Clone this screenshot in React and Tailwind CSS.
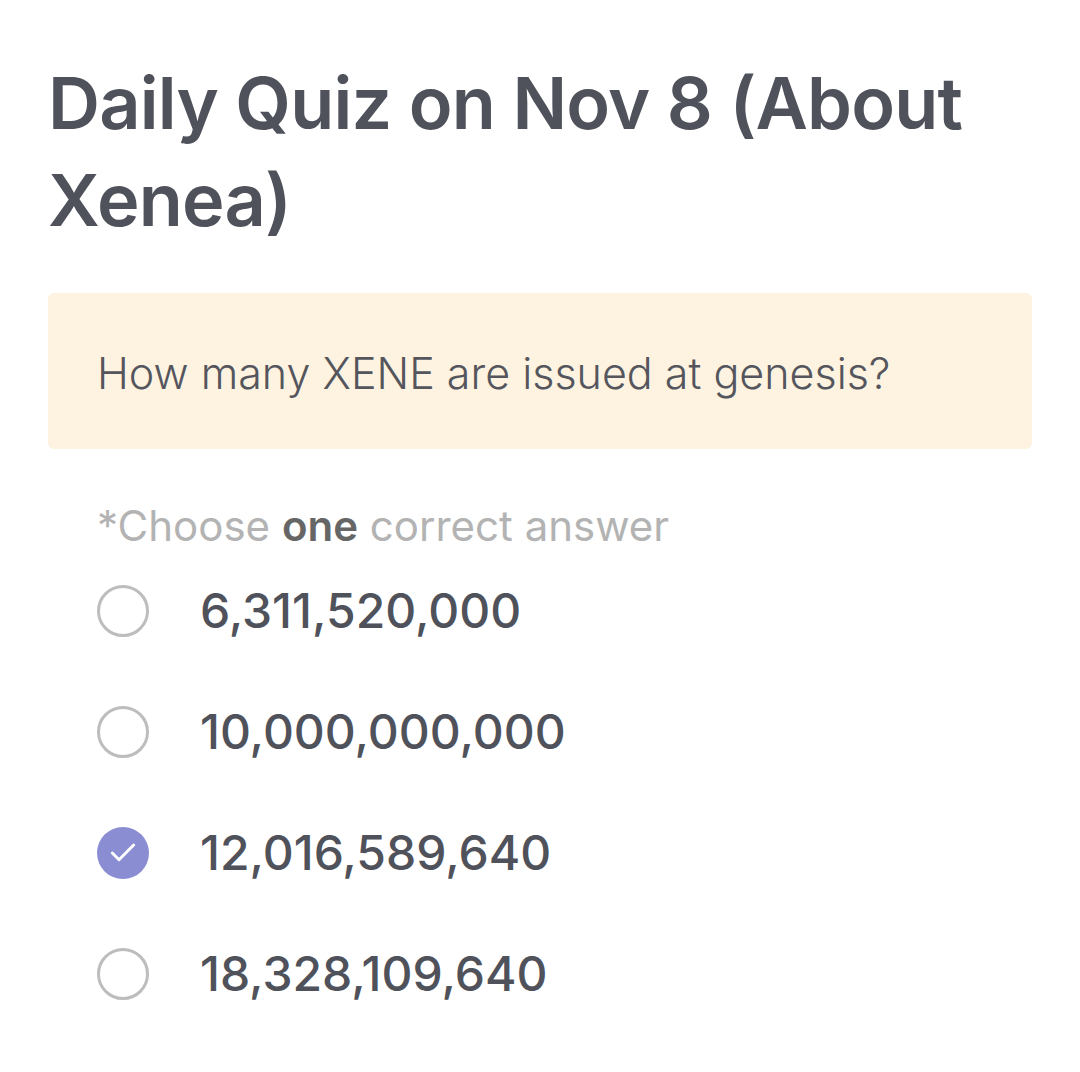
import { Check } from "lucide-react";

const options = [
  { label: "6,311,520,000", checked: false },
  { label: "10,000,000,000", checked: false },
  { label: "12,016,589,640", checked: true },
  { label: "18,328,109,640", checked: false },
];

function Radio({ checked }) {
  if (checked)
    return (
      <div className="w-[52px] h-[52px] rounded-full bg-[#8b8dd3] flex items-center justify-center shrink-0">
        <Check className="w-[32px] h-[32px] text-white" strokeWidth={2.2} />
      </div>
    );
  return <div className="w-[52px] h-[52px] rounded-full border-[3px] border-[#bdbdbd] shrink-0" />;
}

export default function App() {
  return (
    <div className="bg-white min-h-[1072px] px-[48px] pt-[54px] font-['Inter',sans-serif]">
      <h1 className="text-[72px] leading-[97px] font-semibold text-[#50525b] tracking-[-0.8px]">
        Daily Quiz on Nov 8 (About Xenea)
      </h1>
      <div className="mt-[45px] bg-[#fdf3e0] rounded-[6px] h-[156px] flex items-center px-[49px]">
        <p className="text-[43px] text-[#55565d] font-light pt-[4px]">How many XENE are issued at genesis?</p>
      </div>
      <div className="pl-[49px] mt-[52px]">
        <p className="text-[42px] text-[#b3b3b3] leading-[50px]">
          *Choose <span className="font-semibold text-[#666]">one</span> correct answer
        </p>
        <div className="flex flex-col -mt-[1px]">
          {options.map((o) => (
            <div key={o.label} className="flex items-center h-[121px] gap-[51px]">
              <Radio checked={o.checked} />
              <span className="text-[48px] font-medium text-[#50525b]">{o.label}</span>
            </div>
          ))}
        </div>
      </div>
    </div>
  );
}
